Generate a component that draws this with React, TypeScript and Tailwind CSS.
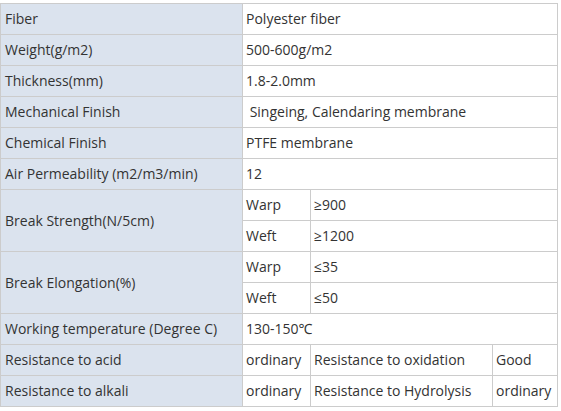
const label = 'border border-[#cccccc] bg-[#dbe3ee] px-[4px] text-left font-normal';
const cell = 'border border-[#cccccc] bg-white px-[3px]';

export default function App() {
  return (
    <div className="bg-white pt-[3px] w-[561px] h-[411px]">
      <table
        className="table-fixed border-collapse text-[14px] text-[#333333] leading-[30px]"
        style={{ fontFamily: '"Open Sans", "Noto Sans", sans-serif' }}
      >
        <colgroup>
          <col className="w-[242px]" />
          <col className="w-[68px]" />
          <col className="w-[182px]" />
          <col className="w-[65px]" />
        </colgroup>
        <tbody>
          <tr>
            <th className={label}>Fiber</th>
            <td className={cell} colSpan={3}>Polyester fiber</td>
          </tr>
          <tr>
            <th className={label}>Weight(g/m2)</th>
            <td className={cell} colSpan={3}>500-600g/m2</td>
          </tr>
          <tr>
            <th className={label}>Thickness(mm)</th>
            <td className={cell} colSpan={3}>1.8-2.0mm</td>
          </tr>
          <tr>
            <th className={label}>Mechanical Finish</th>
            <td className={cell} colSpan={3}>&nbsp;Singeing, Calendaring membrane</td>
          </tr>
          <tr>
            <th className={label}>Chemical Finish</th>
            <td className={cell} colSpan={3}>PTFE membrane</td>
          </tr>
          <tr>
            <th className={label}>Air Permeability (m2/m3/min)</th>
            <td className={cell} colSpan={3}>12</td>
          </tr>
          <tr>
            <th className={label} rowSpan={2}>Break Strength(N/5cm)</th>
            <td className={cell}>Warp</td>
            <td className={cell} colSpan={2}>≥900</td>
          </tr>
          <tr>
            <td className={cell}>Weft</td>
            <td className={cell} colSpan={2}>≥1200</td>
          </tr>
          <tr>
            <th className={label} rowSpan={2}>Break Elongation(%)</th>
            <td className={cell}>Warp</td>
            <td className={cell} colSpan={2}>≤35</td>
          </tr>
          <tr>
            <td className={cell}>Weft</td>
            <td className={cell} colSpan={2}>≤50</td>
          </tr>
          <tr>
            <th className={label}>Working temperature (Degree C)</th>
            <td className={cell} colSpan={3}>130-150℃</td>
          </tr>
          <tr>
            <th className={label}>Resistance to acid</th>
            <td className={cell}>ordinary</td>
            <td className={cell}>Resistance to oxidation</td>
            <td className={cell}>Good</td>
          </tr>
          <tr>
            <th className={label}>Resistance to alkali</th>
            <td className={cell}>ordinary</td>
            <td className={cell}>Resistance to Hydrolysis</td>
            <td className={cell}>ordinary</td>
          </tr>
        </tbody>
      </table>
    </div>
  );
}
